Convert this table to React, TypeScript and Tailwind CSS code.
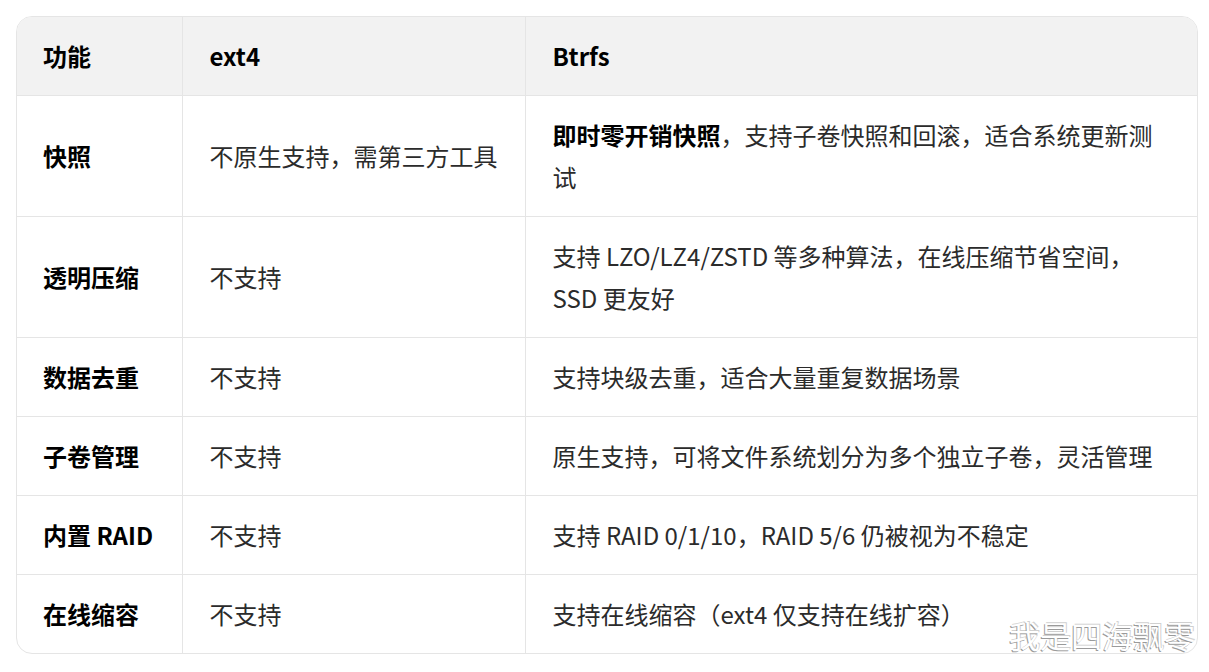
import React from "react";

interface Row {
  feature: string;
  ext4: string;
  btrfs: React.ReactNode;
}

const rows: Row[] = [
  {
    feature: "快照",
    ext4: "不原生支持，需第三方工具",
    btrfs: (
      <>
        <strong className="font-bold text-black">即时零开销快照</strong>
        ，支持子卷快照和回滚，适合系统更新测试
      </>
    ),
  },
  {
    feature: "透明压缩",
    ext4: "不支持",
    btrfs: "支持 LZO/LZ4/ZSTD 等多种算法，在线压缩节省空间，SSD 更友好",
  },
  { feature: "数据去重", ext4: "不支持", btrfs: "支持块级去重，适合大量重复数据场景" },
  {
    feature: "子卷管理",
    ext4: "不支持",
    btrfs: "原生支持，可将文件系统划分为多个独立子卷，灵活管理",
  },
  { feature: "内置 RAID", ext4: "不支持", btrfs: "支持 RAID 0/1/10，RAID 5/6 仍被视为不稳定" },
  { feature: "在线缩容", ext4: "不支持", btrfs: "支持在线缩容（ext4 仅支持在线扩容）" },
];

const App: React.FC = () => {
  return (
    <div
      className="relative w-[1209px] h-[672px] bg-white pt-4 pl-4"
      style={{ fontFamily: '"Noto Sans CJK SC", "Noto Sans", sans-serif' }}
    >
      <div className="w-[1182px] overflow-hidden rounded-2xl border border-[#e5e5e5]">
        <table className="w-full table-fixed border-collapse text-[24px] leading-[42px] text-[#2b2b2b]">
          <colgroup>
            <col className="w-[165px]" />
            <col className="w-[343px]" />
            <col />
          </colgroup>
          <thead className="bg-[#f2f2f2]">
            <tr className="h-[78px]">
              <th className="px-[26px] text-left font-bold text-black">功能</th>
              <th className="border-l border-[#e5e5e5] px-[27px] text-left font-bold text-black">
                ext4
              </th>
              <th className="border-l border-[#e5e5e5] px-[27px] text-left font-bold text-black">
                Btrfs
              </th>
            </tr>
          </thead>
          <tbody>
            {rows.map((row, index) => (
              <tr key={index} className="border-t border-[#e5e5e5]">
                <td className="px-[26px] py-[18px] font-bold text-black">{row.feature}</td>
                <td className="border-l border-[#e5e5e5] px-[27px] py-[18px]">{row.ext4}</td>
                <td className="border-l border-[#e5e5e5] px-[27px] py-[18px]">{row.btrfs}</td>
              </tr>
            ))}
          </tbody>
        </table>
      </div>

      {/* watermark */}
      <div
        className="absolute right-[14px] top-[617px] text-[31px] leading-[36px] text-white"
        style={{ textShadow: "-1px 1px 0 #9a9a9a, 1px -1px 0 #d0d0d0" }}
      >
        我是四海飘零
      </div>
    </div>
  );
};

export default App;
